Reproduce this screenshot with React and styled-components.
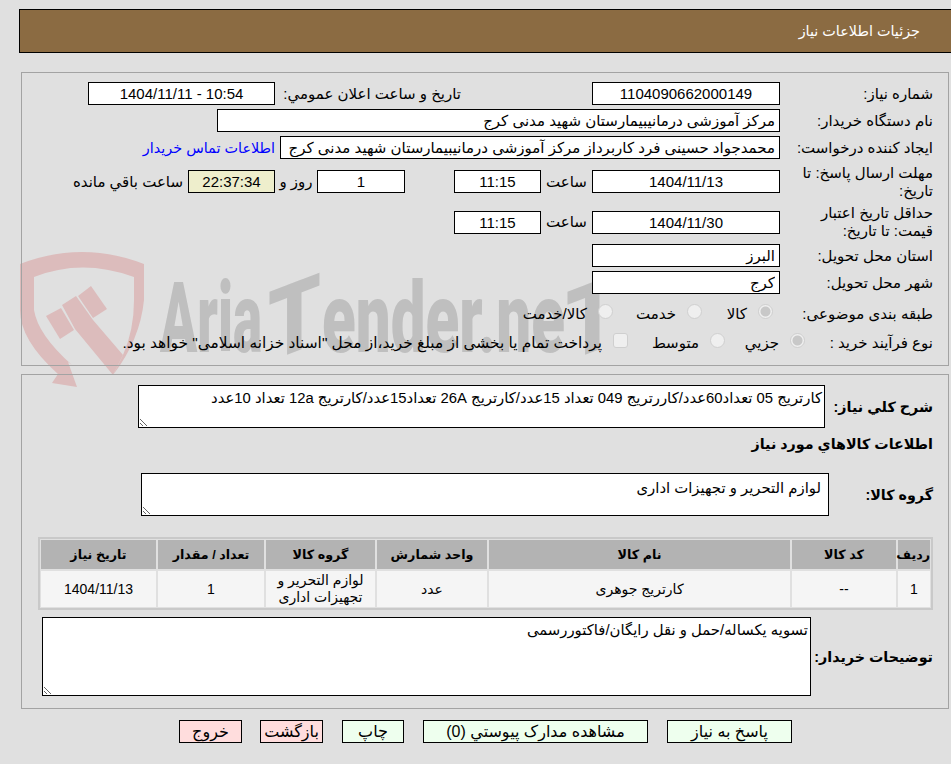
import React from "react";
import styled, { createGlobalStyle } from "styled-components";

const GlobalStyle = createGlobalStyle`
  html, body {
    margin: 0;
    padding: 0;
    background: #e0e0e0;
  }
  body {
    font-family: "Liberation Sans", "DejaVu Sans", sans-serif;
    font-size: 15px;
    color: #000;
  }
`;

const Page = styled.div`
  position: relative;
  width: 951px;
  height: 764px;
  overflow: hidden;
  padding: 9px 0 0 19px;
  box-sizing: border-box;
  direction: rtl;
`;

const Watermark = styled.svg`
  position: absolute;
  left: 0;
  top: 0;
  z-index: 0;
  direction: ltr;
`;

const Content = styled.div`
  position: relative;
  z-index: 1;
  width: 932px;
`;

const Header = styled.div`
  box-sizing: border-box;
  height: 44px;
  background: #8b6b42;
  border: solid #000;
  border-width: 1px 0 1px 1px;
  color: #fff;
  font-size: 14.4px;
  display: flex;
  align-items: center;
  padding-right: 31px;
`;

const Panel = styled.div`
  box-sizing: border-box;
  width: 928px;
  margin: ${(p) => p.$top}px 2px 0 0;
  height: ${(p) => p.$h}px;
  border: 1px solid #a3a3a3;
  padding: ${(p) => p.$pad}px 15px 0 0;
  display: flex;
  flex-direction: column;
  gap: ${(p) => p.$gap || 0}px;
`;

const Row = styled.div`
  display: flex;
  align-items: center;
  flex: none;
  height: ${(p) => p.$h || 23}px;
  margin-top: ${(p) => p.$mt || 0}px;
`;

const Label = styled.div`
  flex: none;
  width: ${(p) => p.$w || 153}px;
  margin-right: ${(p) => p.$mr || 0}px;
  line-height: 18px;
  font-size: ${(p) => (p.$bold ? "14.3px" : "15px")};
  font-weight: ${(p) => (p.$bold ? 700 : 400)};
`;

const Field = styled.input`
  flex: none;
  box-sizing: border-box;
  width: ${(p) => p.$w}px;
  height: 23px;
  margin: 0 ${(p) => p.$mr || 0}px 0 0;
  padding: 0 4px;
  border: 1px solid #000;
  border-radius: 0;
  outline: none;
  background: ${(p) => (p.$timer ? "#eeeecc" : "#fff")};
  font: inherit;
  font-size: 15px;
  color: #000;
  direction: rtl;
  text-align: ${(p) => (p.$center ? "center" : "right")};
`;

const BuyerLink = styled.a`
  color: #0000ff;
  font-size: 14.4px;
  text-decoration: none;
  margin-right: 5px;
`;

const Caption = styled.span`
  flex: none;
  width: ${(p) => p.$w}px;
  text-align: ${(p) => p.$align || "center"};
  margin-right: ${(p) => p.$mr || 0}px;
  font-size: ${(p) => p.$size || 15}px;
`;

const Option = styled.label`
  flex: none;
  display: flex;
  align-items: center;
  gap: 11px;
  width: ${(p) => p.$w}px;
  white-space: nowrap;
`;

const Radio = styled.span`
  flex: none;
  box-sizing: border-box;
  width: 15px;
  height: 15px;
  margin-right: 7px;
  margin-top: -5px;
  border-radius: ${(p) => (p.$square ? "3px" : "50%")};
  border: 1px solid #cfcfcf;
  background: ${(p) =>
    p.$checked
      ? "radial-gradient(circle, #c8c8c8 0 4.5px, #efefef 5.5px)"
      : "#efefef"};
`;

const NoteArea = styled.textarea`
  flex: none;
  box-sizing: border-box;
  display: block;
  width: ${(p) => p.$w}px;
  height: ${(p) => p.$h}px;
  padding: ${(p) => p.$pt || 3}px ${(p) => p.$pr || 2}px 2px 2px;
  border: 1px solid #000;
  border-radius: 0;
  outline: none;
  background: #fff;
  font: inherit;
  font-size: 14.85px;
  color: #000;
  direction: rtl;
  margin: 0;
`;

const ItemsTable = styled.table`
  width: 895px;
  margin-top: 21px;
  table-layout: fixed;
  border: 1px solid #c9c9c9;
  box-shadow: inset 0 0 0 1px #c9c9c9;
  border-spacing: 2px;
  border-collapse: separate;
  box-sizing: border-box;
  flex: none;
`;

const HeadCell = styled.th`
  height: 29px;
  padding: 0;
  background: #b3b3b3;
  font-size: 12.7px;
  font-weight: 700;
  text-align: center;
  width: ${(p) => p.$w}px;
`;

const Cell = styled.td`
  height: 36px;
  padding: 0;
  background: #f5f5f5;
  font-size: 14px;
  text-align: center;
  line-height: 17px;
`;

const Buttons = styled.div`
  display: flex;
  margin: 11px 0 0 0;
  padding-right: 159px;
`;

const ActionButton = styled.button`
  flex: none;
  box-sizing: border-box;
  width: ${(p) => p.$w}px;
  height: 23px;
  margin: 0 0 0 ${(p) => p.$gap}px;
  padding: 0;
  border: 1px solid #000;
  border-radius: 0;
  background: ${(p) => (p.$danger ? "#ffdddd" : "#eeffee")};
  font: inherit;
  font-size: 16px;
  color: #000;
`;

const WaterText = styled.text`
  fill: #bfbfbf;
  font-family: Roboto, sans-serif;
  font-weight: 900;
  font-size: 98px;
`;

const columns = [
  ["ردیف", 32],
  ["کد کالا", 104],
  ["نام کالا", 301],
  ["واحد شمارش", 110],
  ["گروه کالا", 109],
  ["تعداد / مقدار", 106],
  ["تاریخ نیاز", 115],
];

export default function App() {
  return (
    <>
      <GlobalStyle />
      <Page>
        <Watermark width="951" height="764" viewBox="0 0 951 764">
          <path
            fill="#dcbcbc"
            d="M20 264 Q82 240 144 264 L144 300 Q140 340 113 375 L123 355 Q134 330 134 300 L134 277 Q82 258 34 277 L34 310 Q38 335 72 365 L68 362 L77 387 L52 383 L58 374 Q20 340 20 310 Z"
          />
          <path fill="#dcbcbc" d="M46 316 L61 308 L74 330 L60 339 Z" />
          <path fill="#dcbcbc" d="M62 305 L76 296 L93 320 L123 355 L113 375 L75 329 Z" />
          <path fill="#dcbcbc" d="M78 296 L91 286 L107 309 L93 318 Z" />
          <WaterText x="160" y="352" textLength="102" lengthAdjust="spacingAndGlyphs">Aria</WaterText>
          <WaterText x="268" y="352" textLength="53" lengthAdjust="spacingAndGlyphs" transform="translate(294 0) skewY(-21) translate(-294 0)">T</WaterText>
          <WaterText x="322" y="352" textLength="243" lengthAdjust="spacingAndGlyphs">ender.ne</WaterText>
          <WaterText x="566" y="352" textLength="53" lengthAdjust="spacingAndGlyphs" transform="translate(592 0) skewY(-21) translate(-592 0)">T</WaterText>
        </Watermark>
        <Content>
          <Header>جزئیات اطلاعات نیاز</Header>
          <Panel $top={19} $h={294} $pad={9} $gap={4}>
            <Row>
              <Label>شماره نیاز:</Label>
              <Field $w={188} $center readOnly value="1104090662000149" />
              <Label $w={186} $mr={131}>تاریخ و ساعت اعلان عمومي:</Label>
              <Field $w={187} $center readOnly value="10:54 - 1404/11/11" />
            </Row>
            <Row>
              <Label>نام دستگاه خریدار:</Label>
              <Field $w={563} readOnly value="مرکز آموزشی درمانیبیمارستان شهید مدنی کرج" />
            </Row>
            <Row>
              <Label>ایجاد کننده درخواست:</Label>
              <Field $w={500} readOnly value="محمدجواد حسینی فرد کاربرداز مرکز آموزشی درمانیبیمارستان شهید مدنی کرج" />
              <BuyerLink href="#">اطلاعات تماس خریدار</BuyerLink>
            </Row>
            <Row $h={37}>
              <Label>مهلت ارسال پاسخ: تا تاریخ:</Label>
              <Field $w={188} $center readOnly value="1404/11/13" />
              <Caption $w={51}>ساعت</Caption>
              <Field $w={87} $center readOnly value="11:15" />
              <Field $w={88} $mr={49} $center readOnly value="1" />
              <Caption $w={42}>روز و</Caption>
              <Field $w={87} $center $timer readOnly value="22:37:34" />
              <Caption $w={120} $align="right" $mr={5}>ساعت باقي مانده</Caption>
            </Row>
            <Row $h={36}>
              <Label>حداقل تاریخ اعتبار<br />قیمت: تا تاریخ:</Label>
              <Field $w={188} $center readOnly value="1404/11/30" />
              <Caption $w={51}>ساعت</Caption>
              <Field $w={87} $center readOnly value="11:15" />
            </Row>
            <Row>
              <Label>استان محل تحویل:</Label>
              <Field $w={188} readOnly value="البرز" />
            </Row>
            <Row>
              <Label>شهر محل تحویل:</Label>
              <Field $w={188} readOnly value="کرج" />
            </Row>
            <Row $h={32}>
              <Label>طبقه بندی موضوعی:</Label>
              <Option $w={71}><Radio $checked />کالا</Option>
              <Option $w={89}><Radio />خدمت</Option>
              <Option $w={120}><Radio />کالا/خدمت</Option>
            </Row>
            <Row $h={18}>
              <Label $w={121}>نوع فرآیند خرید :</Label>
              <Option $w={80}><Radio $checked />جزيي</Option>
              <Option $w={97}><Radio />متوسط</Option>
              <Option $w={520}>
                <Radio $square />
                <Caption $w={490} $align="right" $size={15.4}>پرداخت تمام یا بخشی از مبلغ خرید،از محل "اسناد خزانه اسلامی" خواهد بود.</Caption>
              </Option>
            </Row>
          </Panel>
          <Panel $top={8} $h={335} $pad={10}>
            <Row $h={43}>
              <Label $w={108} $bold>شرح كلي نياز:</Label>
              <NoteArea $w={687} $h={43} readOnly value="کارتریج 05 تعداد60عدد/کاررتریج 049 تعداد 15عدد/کارتریج 26A تعداد15عدد/کارتریج 12a تعداد 10عدد" />
            </Row>
            <Row $h={24} $mt={4}>
              <Label $w={300} $bold>اطلاعات كالاهاي مورد نياز</Label>
            </Row>
            <Row $h={43} $mt={17}>
              <Label $w={104} $bold>گروه کالا:</Label>
              <NoteArea $w={688} $h={43} $pt={5} $pr={7} readOnly value="لوازم التحریر و تجهیزات اداری" />
            </Row>
            <ItemsTable>
              <thead>
                <tr>
                  {columns.map(([title, w]) => (
                    <HeadCell key={title} $w={w}>{title}</HeadCell>
                  ))}
                </tr>
              </thead>
              <tbody>
                <tr>
                  <Cell>1</Cell>
                  <Cell>--</Cell>
                  <Cell>کارتریج جوهری</Cell>
                  <Cell>عدد</Cell>
                  <Cell>لوازم التحریر و تجهیزات اداری</Cell>
                  <Cell>1</Cell>
                  <Cell>1404/11/13</Cell>
                </tr>
              </tbody>
            </ItemsTable>
            <Row $h={79} $mt={7}>
              <Label $w={122} $bold>توضیحات خریدار:</Label>
              <NoteArea $w={769} $h={79} readOnly value="تسویه یکساله/حمل و نقل رایگان/فاکتوررسمی" />
            </Row>
          </Panel>
          <Buttons>
            <ActionButton $w={125} $gap={19}>پاسخ به نياز</ActionButton>
            <ActionButton $w={225} $gap={19}>مشاهده مدارک پیوستي (0)</ActionButton>
            <ActionButton $w={62} $gap={19}>چاپ</ActionButton>
            <ActionButton $w={63} $gap={18} $danger>بازگشت</ActionButton>
            <ActionButton $w={63} $gap={0} $danger>خروج</ActionButton>
          </Buttons>
        </Content>
      </Page>
    </>
  );
}
